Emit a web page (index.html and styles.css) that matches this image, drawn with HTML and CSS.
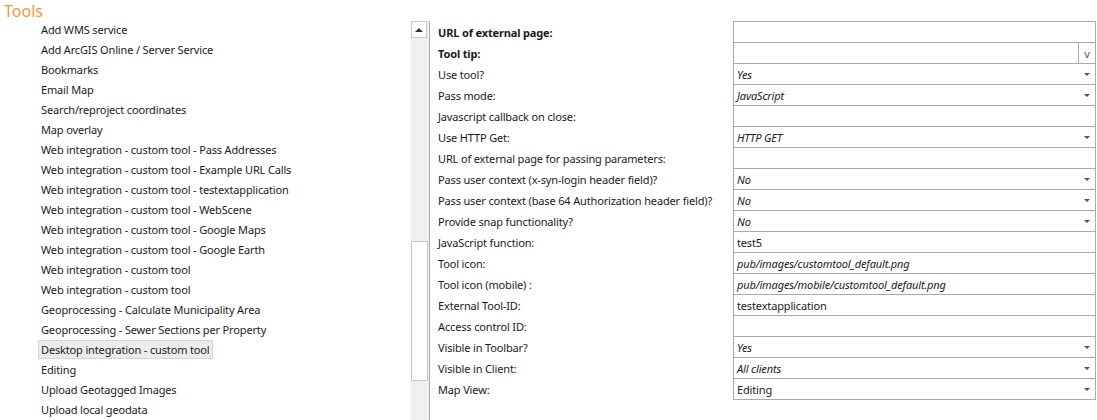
FILE: index.html
```html
<!DOCTYPE html>
<html>
<head>
<meta charset="utf-8">
<link rel="stylesheet" href="styles.css">
</head>
<body>
<div class="title">Tools</div>
<div class="main">
  <div class="list-panel">
    <ul class="tool-list">
      <li><span>Add WMS service</span></li>
      <li><span>Add ArcGIS Online / Server Service</span></li>
      <li><span>Bookmarks</span></li>
      <li><span>Email Map</span></li>
      <li><span>Search/reproject coordinates</span></li>
      <li><span>Map overlay</span></li>
      <li><span>Web integration - custom tool - Pass Addresses</span></li>
      <li><span>Web integration - custom tool - Example URL Calls</span></li>
      <li><span>Web integration - custom tool - testextapplication</span></li>
      <li><span>Web integration - custom tool - WebScene</span></li>
      <li><span>Web integration - custom tool - Google Maps</span></li>
      <li><span>Web integration - custom tool - Google Earth</span></li>
      <li><span>Web integration - custom tool</span></li>
      <li><span>Web integration - custom tool</span></li>
      <li><span>Geoprocessing - Calculate Municipality Area</span></li>
      <li><span>Geoprocessing - Sewer Sections per Property</span></li>
      <li class="selected"><span>Desktop integration - custom tool</span></li>
      <li><span>Editing</span></li>
      <li><span>Upload Geotagged Images</span></li>
      <li><span>Upload local geodata</span></li>
    </ul>
    <div class="scrollbar">
      <div class="scroll-btn"><span class="up-tri"></span></div>
      <div class="scroll-space-top"></div>
      <div class="scroll-thumb"></div>
      <div class="scroll-space-bottom"></div>
    </div>
  </div>
  <div class="form-panel">
    <div class="grid">
      <div class="label bold">URL of external page:</div>
      <div class="cell"></div>

      <div class="label bold">Tool tip:</div>
      <div class="cell cell-btn"><span class="fill"></span><span class="vbtn">v</span></div>

      <div class="label">Use tool?</div>
      <div class="cell select"><span class="val it">Yes</span><span class="arrow"></span></div>

      <div class="label">Pass mode:</div>
      <div class="cell select"><span class="val it">JavaScript</span><span class="arrow"></span></div>

      <div class="label">Javascript callback on close:</div>
      <div class="cell"></div>

      <div class="label">Use HTTP Get:</div>
      <div class="cell select"><span class="val it">HTTP GET</span><span class="arrow"></span></div>

      <div class="label">URL of external page for passing parameters:</div>
      <div class="cell"></div>

      <div class="label">Pass user context (x-syn-login header field)?</div>
      <div class="cell select"><span class="val it">No</span><span class="arrow"></span></div>

      <div class="label">Pass user context (base 64 Authorization header field)?</div>
      <div class="cell select"><span class="val it">No</span><span class="arrow"></span></div>

      <div class="label">Provide snap functionality?</div>
      <div class="cell select"><span class="val it">No</span><span class="arrow"></span></div>

      <div class="label">JavaScript function:</div>
      <div class="cell"><span class="val">test5</span></div>

      <div class="label">Tool icon:</div>
      <div class="cell"><span class="val it">pub/images/customtool_default.png</span></div>

      <div class="label">Tool icon (mobile) :</div>
      <div class="cell"><span class="val it">pub/images/mobile/customtool_default.png</span></div>

      <div class="label">External Tool-ID:</div>
      <div class="cell"><span class="val">testextapplication</span></div>

      <div class="label">Access control ID:</div>
      <div class="cell"></div>

      <div class="label">Visible in Toolbar?</div>
      <div class="cell select"><span class="val it">Yes</span><span class="arrow"></span></div>

      <div class="label">Visible in Client:</div>
      <div class="cell select"><span class="val it">All clients</span><span class="arrow"></span></div>

      <div class="label">Map View:</div>
      <div class="cell select last"><span class="val">Editing</span><span class="arrow"></span></div>
    </div>
  </div>
</div>
</body>
</html>
```

FILE: styles.css
```css
html, body {
  margin: 0;
  padding: 0;
  background: #ffffff;
  overflow: hidden;
}
body {
  width: 1097px;
  height: 420px;
  font-family: "Noto Sans", "Open Sans", sans-serif;
  font-size: 11px;
  letter-spacing: -0.15px;
  color: #1a1a1a;
}
.title {
  height: 20px;
  box-sizing: border-box;
  padding-top: 1px;
  line-height: 20px;
  padding-left: 4px;
  font-size: 16px;
  letter-spacing: 0;
  color: #ec9a44;
}
.main {
  display: flex;
  height: 400px;
}
.list-panel {
  width: 429px;
  display: flex;
  flex: none;
}
.tool-list {
  list-style: none;
  margin: -1px 0 0 0;
  padding: 0 0 0 38px;
  width: 373px;
  box-sizing: content-box;
}
.tool-list li {
  height: 20px;
  display: flex;
  align-items: center;
}
.tool-list li span {
  padding: 0 2px 0 2px;
  line-height: 17px;
  border: 1px solid transparent;
  white-space: nowrap;
}
.tool-list li.selected span {
  background: #ececec;
  border-color: #d6d6d6;
}
.scrollbar {
  width: 18px;
  margin-top: 1px;
  background: #f0f0f0;
  display: flex;
  flex-direction: column;
}
.scroll-btn {
  height: 17px;
  width: 16px;
  box-sizing: border-box;
  border: 1px solid #c8c8c8;
  background: #fff;
  display: flex;
  align-items: center;
  justify-content: center;
}
.up-tri {
  width: 0;
  height: 0;
  border-left: 4px solid transparent;
  border-right: 4px solid transparent;
  border-bottom: 4px solid #333;
}
.scroll-space-top {
  height: 203px;
}
.scroll-thumb {
  height: 140px;
  width: 17px;
  box-sizing: border-box;
  border: 1px solid #c8c8c8;
  background: #fff;
}
.scroll-space-bottom {
  flex: 1;
}
.form-panel {
  flex: 1;
  margin-top: 1px;
  border-left: 1px solid #aaaaaa;
  padding-left: 8px;
}
.grid {
  display: grid;
  grid-template-columns: 295px 363px;
  grid-auto-rows: 21px;
}
.label {
  display: flex;
  align-items: center;
  padding-top: 1px;
  white-space: nowrap;
  color: #1a1a1a;
}
.label.bold {
  font-weight: bold;
}
.cell {
  box-sizing: border-box;
  border: 1px solid #aaaaaa;
  border-bottom: none;
  display: flex;
  align-items: center;
  padding-left: 3px;
  font-size: 11px;
  color: #1a1a1a;
}
.cell.last {
  height: 22px;
  border-bottom: 1px solid #aaaaaa;
}
.cell .it {
  font-style: italic;
}
.cell .val {
  flex: 1;
  white-space: nowrap;
}
.cell-btn {
  padding-left: 0;
  align-items: stretch;
}
.cell-btn .fill {
  flex: 1;
}
.vbtn {
  width: 16px;
  border-left: 1px solid #aaaaaa;
  display: flex;
  align-items: center;
  justify-content: center;
  font-size: 11px;
  color: #555;
}
.select .arrow {
  width: 0;
  height: 0;
  border-left: 3px solid transparent;
  border-right: 3px solid transparent;
  border-top: 3px solid #555;
  margin-right: 5px;
}
```
